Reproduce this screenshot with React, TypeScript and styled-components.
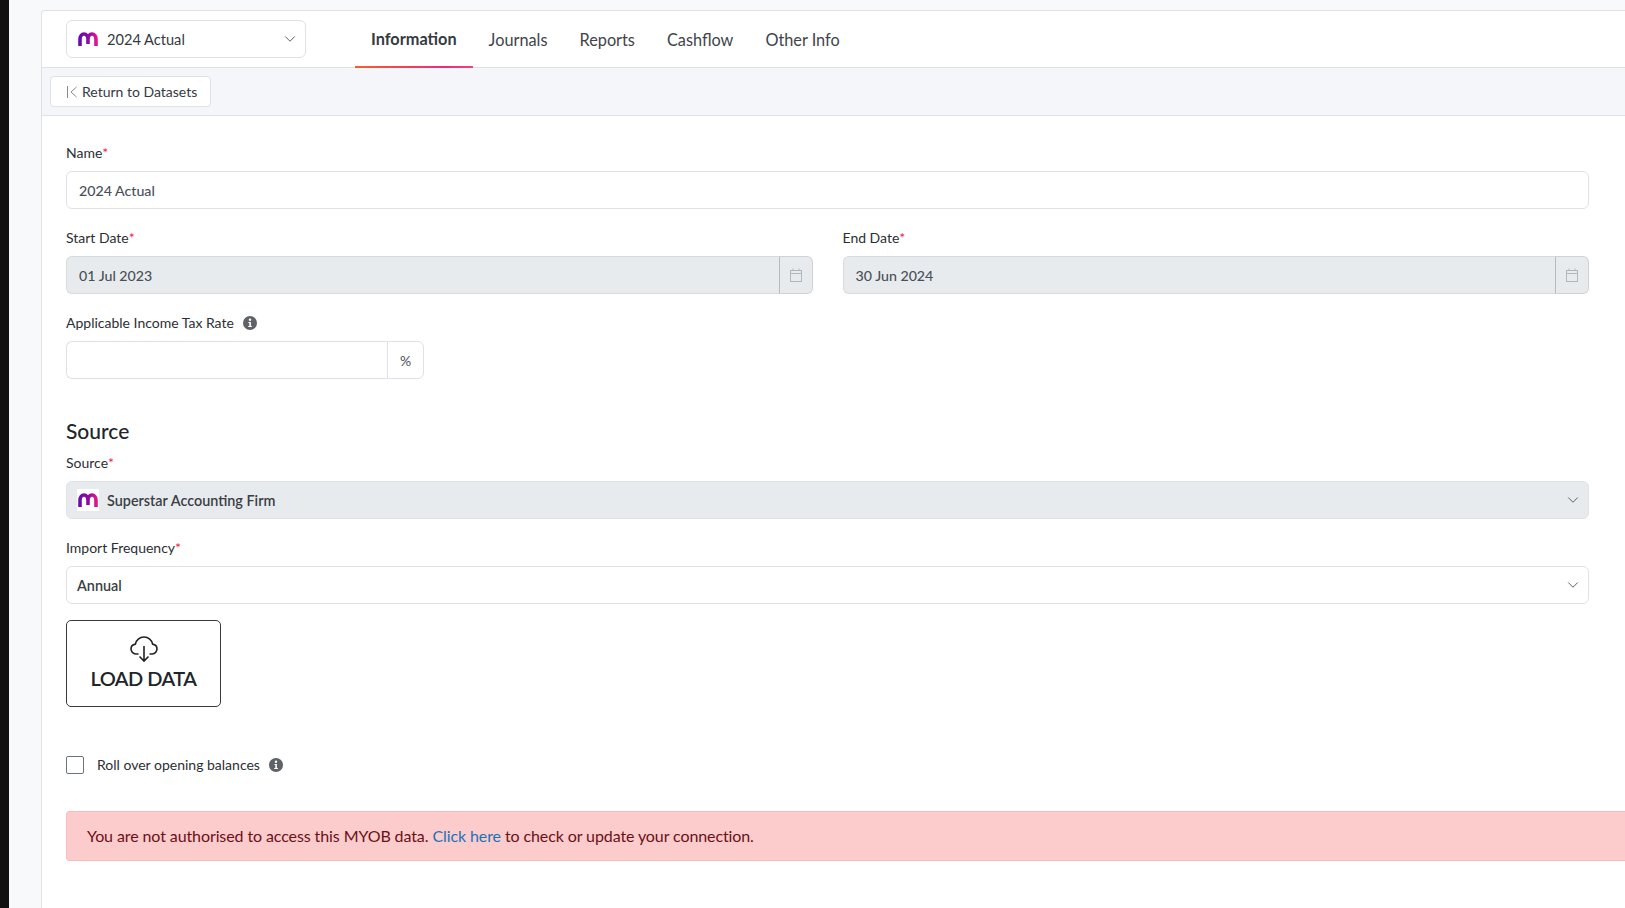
import styled, { createGlobalStyle } from 'styled-components'
import { ChevronDown } from 'lucide-react'

const tabs = ['Information', 'Journals', 'Reports', 'Cashflow', 'Other Info']

function MLogo({ id }: { id: string }) {
  return (
    <svg width="20" height="14" viewBox="0 0 20 14" fill="none">
      <defs>
        <linearGradient id={id} x1="0" y1="0" x2="1" y2="0">
          <stop offset="0" stopColor="#6a0dad" />
          <stop offset="0.5" stopColor="#8a0aa8" />
          <stop offset="1" stopColor="#e0148c" />
        </linearGradient>
      </defs>
      <path
        d="M2 14V7.5C2 4.2 3.6 2 6 2s4 2.2 4 5.5V12M10 7.5C10 4.2 11.6 2 14 2s4 2.2 4 5.5V14"
        stroke={`url(#${id})`}
        strokeWidth="3.6"
      />
    </svg>
  )
}

function InfoDot() {
  return (
    <svg width="14" height="14" viewBox="0 0 14 14">
      <circle cx="7" cy="7" r="7" fill="#5f6368" />
      <circle cx="7" cy="3.8" r="1.2" fill="#fff" />
      <path d="M5.4 6h2.5v4h1v1.1H5.2V10h1.1V7.1h-.9z" fill="#fff" />
    </svg>
  )
}

function CalendarIcon() {
  return (
    <svg width="12" height="14" viewBox="0 0 12 14" fill="none" stroke="#b4b7ba" strokeWidth="1">
      <rect x="0.5" y="2.5" width="11" height="11" />
      <path d="M0.5 5.5h11M3 0.5v2M9 0.5v2" />
    </svg>
  )
}

function DateField({ label, value }: { label: string; value: string }) {
  return (
    <Field>
      <Label>
        {label}
        <Req>*</Req>
      </Label>
      <InputGroup>
        <Input $disabled>{value}</Input>
        <Addon $disabled>
          <CalendarIcon />
        </Addon>
      </InputGroup>
    </Field>
  )
}

export default function App() {
  return (
    <Page>
      <GlobalStyle />
      <BlackStrip />
      <Card>
        <Header>
          <DatasetSelect>
            <MLogo id="logoA" />
            <DatasetName>2024 Actual</DatasetName>
            <ChevronDown size={18} strokeWidth={1.25} color="#555" />
          </DatasetSelect>
          <Tabs>
            {tabs.map((t, i) => (
              <Tab key={t} $active={i === 0}>
                {t}
              </Tab>
            ))}
          </Tabs>
        </Header>
        <Toolbar>
          <ReturnButton>
            <svg width="11" height="12" viewBox="0 0 11 12" fill="none" stroke="#8a8a8a" strokeWidth="1">
              <path d="M0.5 0v12M9.5 1 4 6l5.5 5" />
            </svg>
            Return to Datasets
          </ReturnButton>
        </Toolbar>
        <Form>
          <Field>
            <Label>
              Name<Req>*</Req>
            </Label>
            <Input>2024 Actual</Input>
          </Field>
          <TwoCols>
            <DateField label="Start Date" value="01 Jul 2023" />
            <DateField label="End Date" value="30 Jun 2024" />
          </TwoCols>
          <Field>
            <Label>
              Applicable Income Tax Rate
              <InfoWrap>
                <InfoDot />
              </InfoWrap>
            </Label>
            <TaxGroup>
              <Input />
              <Addon>%</Addon>
            </TaxGroup>
          </Field>
          <Heading>Source</Heading>
          <Field>
            <Label>
              Source<Req>*</Req>
            </Label>
            <SelectBox $disabled>
              <LogoTile>
                <MLogo id="logoB" />
              </LogoTile>
              <SelectText>Superstar Accounting Firm</SelectText>
              <ChevronDown size={18} strokeWidth={1.25} color="#555" />
            </SelectBox>
          </Field>
          <Field>
            <Label>
              Import Frequency<Req>*</Req>
            </Label>
            <SelectBox>
              <SelectText>Annual</SelectText>
              <ChevronDown size={18} strokeWidth={1.25} color="#555" />
            </SelectBox>
          </Field>
          <LoadButton>
            <svg width="30" height="28" viewBox="0 0 30 28" fill="none" stroke="#222" strokeWidth="1.6">
              <path d="M9.5 19H7.5C4.5 19 2 16.8 2 14c0-2.5 1.9-4.5 4.4-4.9C7 5 10.6 2 15 2s8 3 8.6 7.1C26.100 9.500 28 11.500 28 14c0 2.800-2.500 5-5.500 5h-2" />
              <path d="M15 11v15M10.500 21.500 15 26l4.500-4.500" />
            </svg>
            LOAD DATA
          </LoadButton>
          <CheckRow>
            <CheckBox />
            <CheckLabel>Roll over opening balances</CheckLabel>
            <InfoDot />
          </CheckRow>
          <Alert>
            You are not authorised to access this MYOB data. <AlertLink>Click here</AlertLink> to check or update your
            connection.
          </Alert>
        </Form>
      </Card>
    </Page>
  )
}

const GlobalStyle = createGlobalStyle`
  html, body {
    margin: 0;
    padding: 0;
    background: #f8f9fa;
    overflow: hidden;
  }
`
const Page = styled.div`
  display: flex;
  height: 908px;
  overflow: hidden;
  font-family: Lato, 'Liberation Sans', sans-serif;
  color: #212529;
`
const BlackStrip = styled.div`
  width: 9px;
  background: #111;
  flex-shrink: 0;
`
const Card = styled.div`
  flex: 1;
  margin: 10px 0 0 32px;
  min-width: 0;
  background: #fff;
  border-top: 1px solid #dee2e6;
  border-left: 1px solid #dee2e6;
  border-top-left-radius: 4px;
`
const Header = styled.div`
  display: flex;
  align-items: stretch;
  height: 56px;
  padding-left: 24px;
  border-bottom: 1px solid #dee2e6;
  box-sizing: content-box;
`
const DatasetSelect = styled.div`
  display: flex;
  align-items: center;
  width: 240px;
  height: 38px;
  margin-top: 9px;
  padding: 0 6px 0 11px;
  box-sizing: border-box;
  background: #fff;
  border: 1px solid #dee2e6;
  border-radius: 6px;
  font-size: 14.6px;
  color: #343a40;
`
const DatasetName = styled.span`
  flex: 1;
  margin-left: 9px;
`
const Tabs = styled.div`
  display: flex;
  margin-left: 49px;
  font-size: 16.3px;
`
const Tab = styled.div<{ $active?: boolean }>`
  display: flex;
  align-items: center;
  padding: ${(p) => (p.$active ? '0 16px' : '1px 16px 0')};
  margin-bottom: -1px;
  color: ${(p) => (p.$active ? '#343a40' : '#3f444a')};
  font-weight: ${(p) => (p.$active ? 700 : 400)};
  border-bottom: 2px solid transparent;
  border-image: ${(p) => (p.$active ? 'linear-gradient(90deg, #f4602b, #ee2a7b 75%, #f0457f) 1' : 'none')};
`
const Toolbar = styled.div`
  display: flex;
  align-items: flex-start;
  padding: 8px 0 0 8px;
  box-sizing: border-box;
  background: #f5f6fa;
  border-bottom: 1px solid #dee2e6;
  height: 48px;
`
const ReturnButton = styled.div`
  display: flex;
  align-items: center;
  gap: 4px;
  width: 161px;
  height: 31px;
  padding-left: 16px;
  box-sizing: border-box;
  background: #fff;
  border: 1px solid #dee2e6;
  border-radius: 4px;
  font-size: 14px;
  color: #343a40;
`
const Form = styled.div`
  display: flex;
  flex-direction: column;
  padding: 28px 36px 0 24px;
`
const Field = styled.div`
  display: flex;
  flex-direction: column;
  margin-bottom: 20px;
  min-width: 0;
`
const TwoCols = styled.div`
  display: grid;
  grid-template-columns: 1fr 1fr;
  column-gap: 30px;
`
const Label = styled.div`
  display: flex;
  align-items: center;
  height: 17px;
  margin-bottom: 10px;
  font-size: 14px;
  color: #2b2f33;
`
const Req = styled.span`
  color: #e8274b;
`
const InfoWrap = styled.span`
  display: inline-flex;
  margin-left: 9px;
`
const Input = styled.div<{ $disabled?: boolean }>`
  min-width: 0;
  height: 38px;
  line-height: 37px;
  padding: 0 12px;
  box-sizing: border-box;
  border: 1px solid ${(p) => (p.$disabled ? '#d8dbde' : '#dee2e6')};
  border-radius: 6px;
  background: ${(p) => (p.$disabled ? '#e8ebee' : '#fff')};
  font-size: 14.2px;
  font-weight: 500;
  color: #495057;
`
const InputGroup = styled.div`
  display: flex;
  ${Input} {
    flex: 1;
    border-top-right-radius: 0;
    border-bottom-right-radius: 0;
    border-right: 0;
  }
`
const TaxGroup = styled(InputGroup)`
  width: 358px;
`
const Addon = styled.div<{ $disabled?: boolean }>`
  display: flex;
  align-items: center;
  justify-content: center;
  width: ${(p) => (p.$disabled ? '34px' : '37px')};
  height: 38px;
  box-sizing: border-box;
  border: 1px solid ${(p) => (p.$disabled ? '#d0d3d6' : '#dee2e6')};
  border-left-color: ${(p) => (p.$disabled ? '#b8bcc0' : '#dee2e6')};
  border-radius: 0 6px 6px 0;
  background: ${(p) => (p.$disabled ? '#e8ebee' : '#fff')};
  font-size: 14px;
  color: #495057;
`
const Heading = styled.div`
  height: 24px;
  line-height: 24px;
  margin: 20px 0 11px;
  font-size: 21px;
  font-weight: 500;
  color: #212529;
`
const SelectBox = styled.div<{ $disabled?: boolean }>`
  display: flex;
  align-items: center;
  height: 38px;
  padding: 0 6px 0 10px;
  box-sizing: border-box;
  border: 1px solid #dee2e6;
  border-radius: 6px;
  background: ${(p) => (p.$disabled ? '#e8ebee' : '#fff')};
`
const LogoTile = styled.span`
  display: flex;
  align-items: center;
  justify-content: center;
  width: 22px;
  height: 22px;
  margin-right: 8px;
  background: #fff;
`
const SelectText = styled.span`
  flex: 1;
  font-size: 14.4px;
  font-weight: 600;
  color: #3a3f44;
`
const LoadButton = styled.div`
  display: flex;
  flex-direction: column;
  align-items: center;
  gap: 3px;
  width: 155px;
  height: 87px;
  margin-top: -4px;
  padding-top: 14px;
  box-sizing: border-box;
  border: 1px solid #343a40;
  border-radius: 5px;
  font-size: 20px;
  font-weight: 600;
  letter-spacing: -0.5px;
  color: #212529;
`
const CheckRow = styled.div`
  display: flex;
  align-items: center;
  height: 18px;
  margin-top: 49px;
`
const CheckBox = styled.div`
  width: 18px;
  height: 18px;
  box-sizing: border-box;
  border: 1px solid #6c757d;
  border-radius: 2px;
`
const CheckLabel = styled.span`
  margin: 0 9px 2px 13px;
  font-size: 14px;
  color: #2b2f33;
`
const Alert = styled.div`
  height: 50px;
  line-height: 48px;
  margin: 37px -36px 0 0;
  padding: 0 20px;
  box-sizing: border-box;
  background: #fccbcc;
  border: 1px solid #fbbcbe;
  border-right: 0;
  border-radius: 4px 0 0 4px;
  font-size: 16px;
  letter-spacing: -0.1px;
  color: #6b1016;
`
const AlertLink = styled.span`
  color: #1a73b8;
`
